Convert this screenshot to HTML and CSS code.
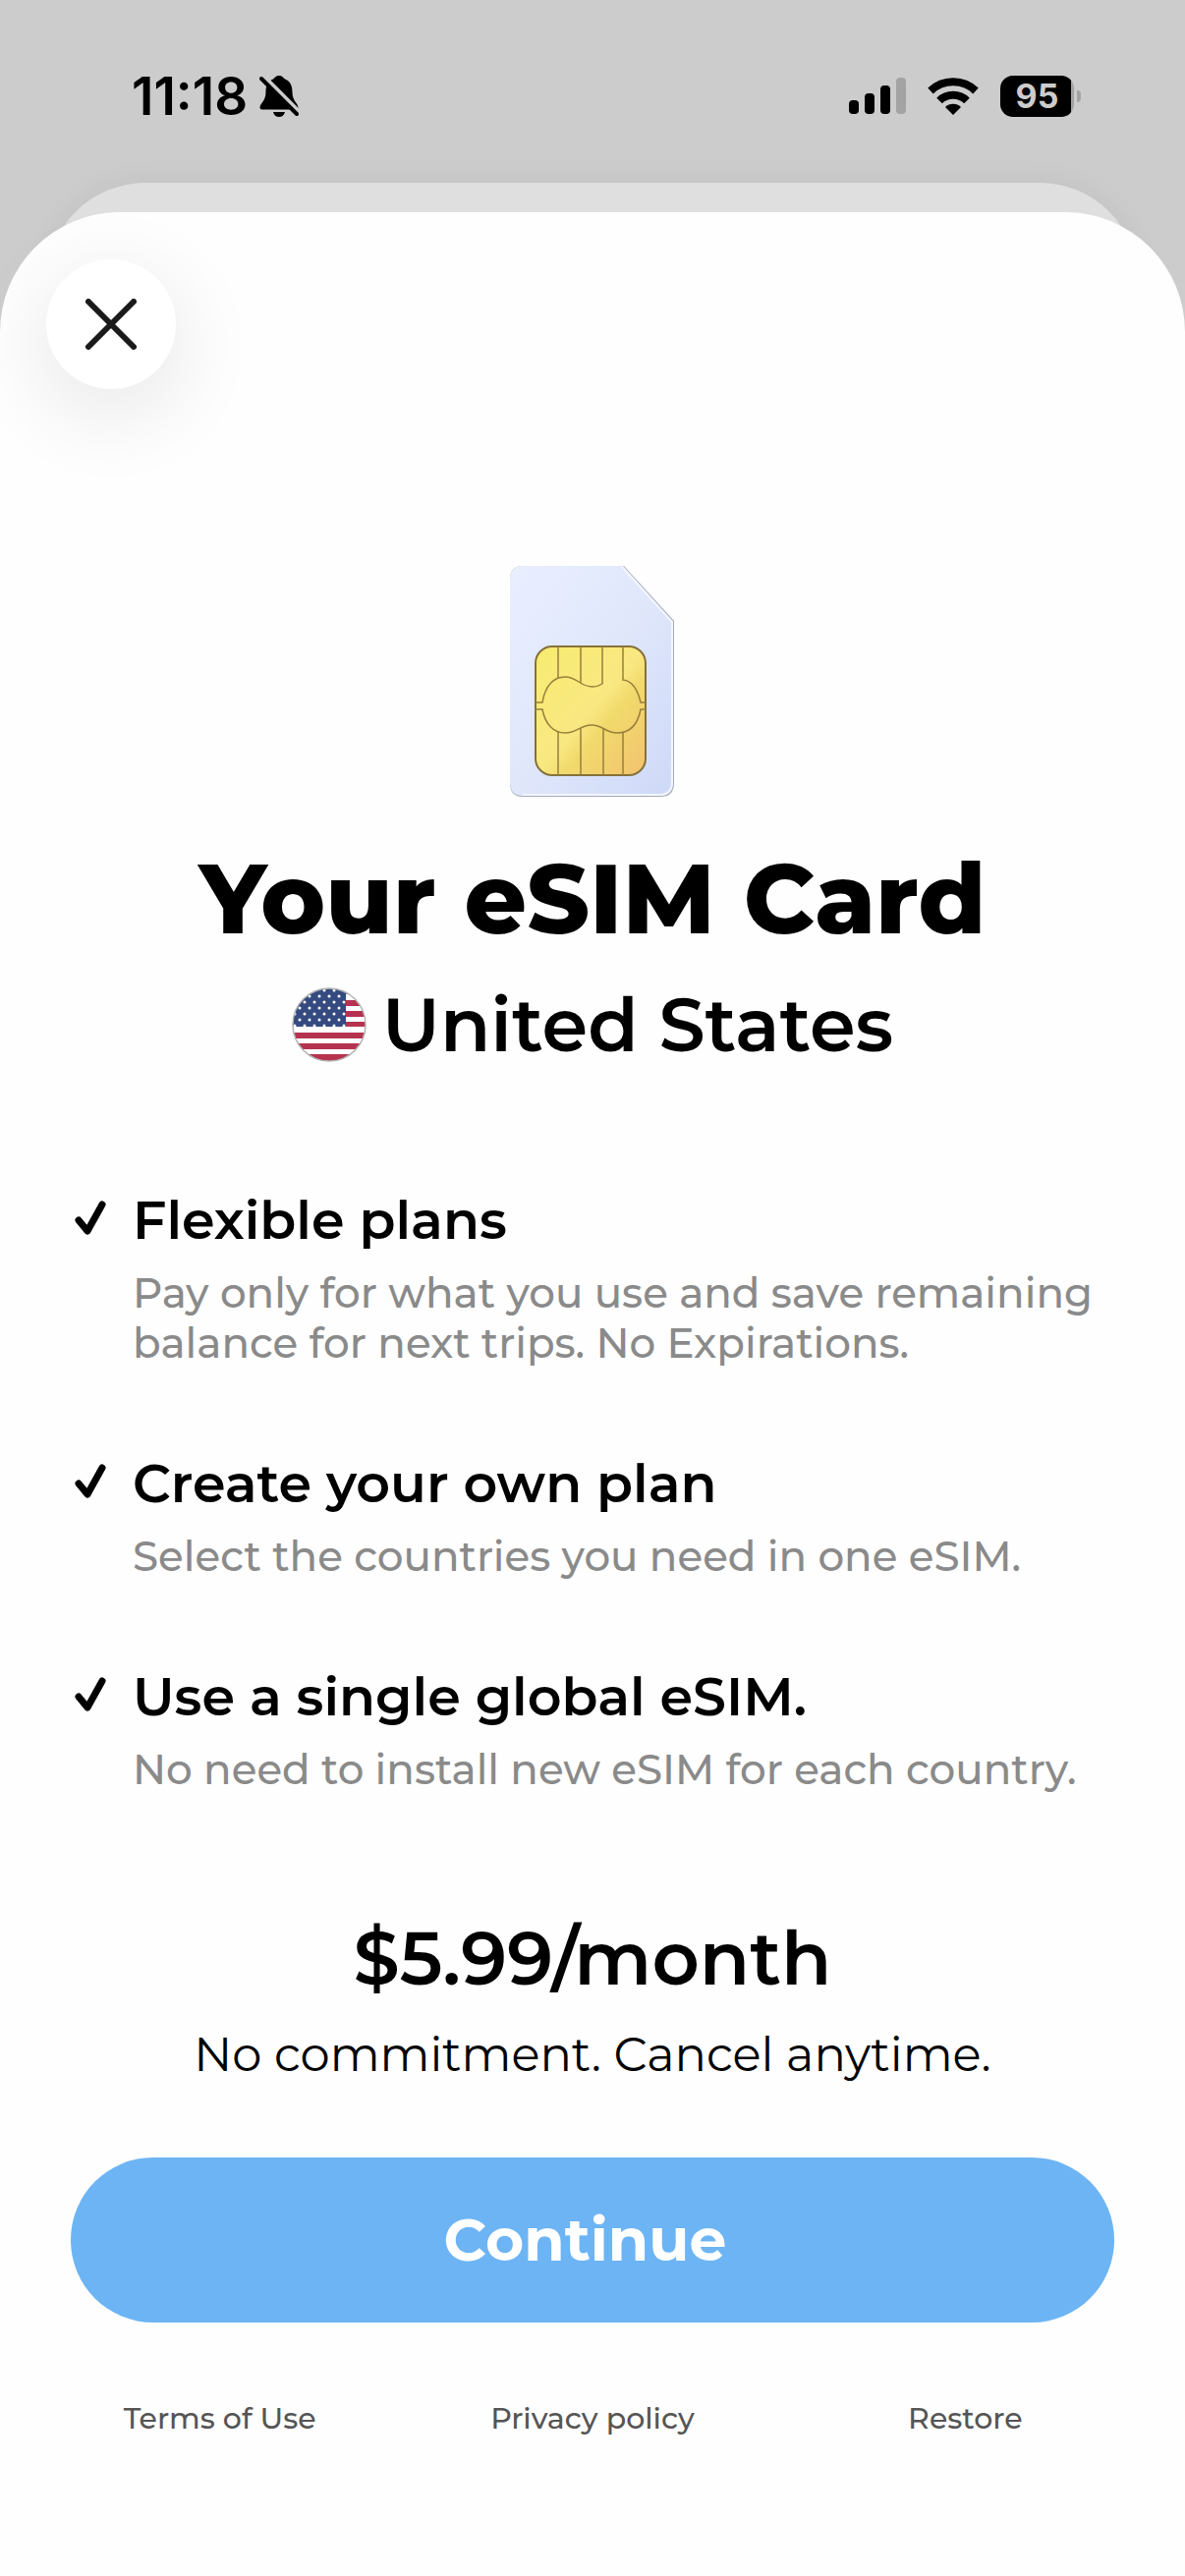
FILE: index.html
```html
<!DOCTYPE html>
<html lang="en">
    <head>
        <meta charset="UTF-8">
        <meta name="viewport" content="width=device-width, initial-scale=1">
        <title>Your eSIM Card</title>
        <link rel="stylesheet" href="styles.css">
    </head>
    <body>

        <header class="status-bar">
            <div class="status-left">
                <span class="time">11:18</span>
                <svg class="bell" viewBox="0 0 40 44" width="40" height="44" aria-hidden="true">
                    <path d="M20 1c-3.500 0-4.500 2.500-6 3.500C8 7 6.500 12 6.500 18c0 9-6 11-6 15.500 0 1.200 1 2 2.200 2h34.600c1.200 0 2.200-.8 2.200-2 0-4.500-6-6.500-6-15.500 0-6-1.500-11-7.500-13.500C24.500 3.500 23.500 1 20 1z"/>
                    <path d="M14 38h12c-.6 3-3 5-6 5s-5.400-2-6-5z"/>
                    <path class="bell-gap" d="M3 0l37 37"/>
                    <path class="bell-slash" d="M2 4l36 36"/>
                </svg>
            </div>
            <div class="status-right">
                <svg viewBox="0 0 58 38" width="58" height="38" aria-hidden="true">
                    <rect x="0" y="23" width="10" height="14" rx="4"/>
                    <rect x="16" y="16" width="10" height="21" rx="4"/>
                    <rect x="32" y="8" width="10" height="29" rx="4"/>
                    <rect x="48" y="0" width="10" height="37" rx="4" fill="#a3a3a3"/>
                </svg>
                <svg class="wifi" viewBox="0 0 52 38" width="52" height="38" aria-hidden="true">
                    <path d="M3 13.500a33.500 33.500 0 0 1 46 0" stroke-width="8"/>
                    <path d="M12 23.500a20 20 0 0 1 28 0" stroke-width="8"/>
                    <path class="wifi-dot" d="M26 38l-8-8a11.500 11.500 0 0 1 16 0z"/>
                </svg>
                <div class="battery"><span class="battery-level">95</span></div>
            </div>
        </header>

        <div class="back-card"></div>

        <main class="sheet">
            <button class="close" type="button" aria-label="Close">
                <svg viewBox="0 0 52 52" width="52" height="52" aria-hidden="true">
                    <path d="M3 3l46 46M49 3L3 49"/>
                </svg>
            </button>

            <svg class="sim" viewBox="0 0 170 237" width="170" height="237" aria-hidden="true">
                <defs>
                    <linearGradient id="card" x1="0" y1="0" x2="1" y2="1">
                        <stop offset="0" stop-color="#e9efff"/>
                        <stop offset="0.5" stop-color="#e0e7fb"/>
                        <stop offset="1" stop-color="#ced9f8"/>
                    </linearGradient>
                    <linearGradient id="chip" x1="0" y1="0" x2="1" y2="1">
                        <stop offset="0" stop-color="#f8ec70"/>
                        <stop offset="0.5" stop-color="#f9e882"/>
                        <stop offset="0.62" stop-color="#f1da6c"/>
                        <stop offset="1" stop-color="#f2c270"/>
                    </linearGradient>
                </defs>
                <path d="M14 0H117L168 56V221Q168 235 154 235H14Q1 235 1 221V14Q1 0 14 0z" fill="#a7abbd"/>
                <path d="M14 0H116L167 57V220Q167 234 153 234H14Q1 234 1 220V14Q1 0 14 0z" fill="url(#card)"/>
                <path d="M115 1L166 57V220Q166 233 153 233H14" fill="none" stroke="#f3f6ff" stroke-width="2"/>
                <rect x="27" y="82" width="112" height="131" rx="17" fill="url(#chip)" stroke="#85713a" stroke-width="2"/>
                <g fill="none" stroke="#98803c" stroke-width="1.500">
                    <path d="M27 139h7C37 121 46 113 57 113c13 0 15 10 28 10 4 0 7-1 10-3V82M116 82v34c10 1 15 10 18 23h5"/>
                    <path d="M27 146h7c3 16 12 24 23 24 13 0 15-8 27-8s14 8 26 8c13 0 21-8 24-24h5"/>
                    <path d="M50 82v32M73 82v37M50 169v44M73 165v48M96 165v48M116 170v43"/>
                </g>
            </svg>

            <h1>Your eSIM Card</h1>

            <div class="country">
                <svg viewBox="0 0 76 76" width="76" height="76" aria-hidden="true">
                    <defs>
                        <clipPath id="round"><circle cx="38" cy="38" r="37"/></clipPath>
                        <pattern id="stars" width="10" height="12" patternUnits="userSpaceOnUse">
                            <circle cx="3" cy="3" r="1.500" fill="#fff"/>
                            <circle cx="8" cy="9" r="1.500" fill="#fff"/>
                        </pattern>
                    </defs>
                    <g clip-path="url(#round)">
                        <path d="M0 0h76v76H0z" fill="#fff"/>
                        <path d="M0 2h76v5H0zM0 13h76v6H0zM0 24h76v6H0zM0 35h76v5H0zM0 46h76v6H0zM0 57h76v6H0zM0 68h76v8H0z" fill="#b5334f"/>
                        <path d="M0 0h55v40H0z" fill="#344a80"/>
                        <path d="M0 0h55v40H0z" fill="url(#stars)"/>
                    </g>
                    <circle cx="38" cy="38" r="37" fill="none" stroke="#b3b3b3" stroke-width="1.500"/>
                </svg>
                <h2>United States</h2>
            </div>

            <ul class="features">
                <li>
                    <svg class="check" viewBox="0 0 38 38" width="38" height="38" aria-hidden="true"><path d="M8 21l9 11L32 5"/></svg>
                    <div>
                        <h3>Flexible plans</h3>
                        <p>Pay only for what you use and save remaining balance for next trips. No Expirations.</p>
                    </div>
                </li>
                <li>
                    <svg class="check" viewBox="0 0 38 38" width="38" height="38" aria-hidden="true"><path d="M8 21l9 11L32 5"/></svg>
                    <div>
                        <h3>Create your own plan</h3>
                        <p>Select the countries you need in one eSIM.</p>
                    </div>
                </li>
                <li>
                    <svg class="check" viewBox="0 0 38 38" width="38" height="38" aria-hidden="true"><path d="M8 21l9 11L32 5"/></svg>
                    <div>
                        <h3>Use a single global eSIM.</h3>
                        <p>No need to install new eSIM for each country.</p>
                    </div>
                </li>
            </ul>

            <p class="price">$5.99/month</p>
            <p class="terms">No commitment. Cancel anytime.</p>

            <button class="continue" type="button">Continue</button>

            <nav class="links">
                <a href="#">Terms of Use</a>
                <a href="#">Privacy policy</a>
                <a href="#">Restore</a>
            </nav>
        </main>

    </body>
</html>
```
FILE: styles.css
```css
* {
    box-sizing: border-box;
}
body {
    display: flex;
    flex-direction: column;
    min-height: 100vh;
    margin: 0;
    background: #cccccc;
    color: #000;
    font-family: Montserrat, Inter, sans-serif;
}
h1, h2, h3, p, ul {
    margin: 0;
    padding: 0;
}
svg {
    flex: none;
}

/* status bar */
.status-bar {
    display: flex;
    justify-content: space-between;
    height: 186px;
    padding: 68px 106px 0 134px;
    font-family: Inter, sans-serif;
}
.status-left,
.status-right {
    display: flex;
    align-items: center;
    height: 60px;
}
.status-left {
    gap: 12px;
}
.status-right {
    gap: 22px;
}
.time {
    font-size: 53px;
    font-weight: 600;
}
.bell-gap,
.bell-slash {
    fill: none;
    stroke: #cccccc;
    stroke-width: 4;
}
.bell-slash {
    stroke: #000;
    stroke-linecap: round;
}
.wifi {
    fill: none;
    stroke: #000;
}
.wifi-dot {
    fill: #000;
    stroke: none;
}
.battery {
    display: flex;
    align-items: center;
    gap: 3px;
}
.battery::after {
    content: "";
    width: 4px;
    height: 12px;
    border-radius: 0 4px 4px 0;
    background: #a3a3a3;
}
.battery-level {
    width: 75px;
    height: 42px;
    border-radius: 13px;
    background: linear-gradient(to right, #000 96%, #a3a3a3 96%);
    color: #cccccc;
    font-size: 34px;
    font-weight: 700;
    line-height: 42px;
    text-align: center;
}

/* stacked sheets */
.back-card {
    height: 130px;
    margin: 0 48px;
    border-radius: 100px 100px 0 0;
    background: #dfdfdf;
    box-shadow: 0 0 30px rgba(0, 0, 0, 0.06);
}
.sheet {
    display: flex;
    flex: 1;
    flex-direction: column;
    align-items: center;
    margin-top: -100px;
    padding: 48px 72px;
    border-radius: 122px 122px 0 0;
    background: #fefefe;
    z-index: 1;
}
.close {
    display: flex;
    align-items: center;
    justify-content: center;
    align-self: flex-start;
    width: 132px;
    height: 132px;
    margin-left: -25px;
    border: none;
    border-radius: 50%;
    background: #fff;
    box-shadow: 0 22px 80px 10px rgba(0, 0, 0, 0.08);
}
.close path {
    fill: none;
    stroke: #1a1a1a;
    stroke-width: 6;
    stroke-linecap: round;
}
.sim {
    margin-top: 180px;
}
h1 {
    margin-top: 42px;
    font-size: 99px;
    font-weight: 800;
    line-height: 120px;
    text-align: center;
}
.country {
    display: flex;
    align-items: center;
    gap: 16px;
    margin-top: 22px;
}
h2 {
    font-size: 75px;
    font-weight: 600;
    line-height: 92px;
}

/* feature list */
.features {
    display: flex;
    flex-direction: column;
    gap: 84px;
    width: 100%;
    margin-top: 120px;
    list-style: none;
}
.features li {
    display: flex;
    gap: 25px;
}
.check {
    margin-top: 12px;
    fill: none;
    stroke: #000;
    stroke-width: 7;
    stroke-linecap: round;
    stroke-linejoin: round;
}
h3 {
    font-size: 54px;
    font-weight: 600;
    line-height: 66px;
}
.features p {
    margin-top: 16px;
    color: #8a8a8a;
    font-size: 42px;
    font-weight: 500;
    line-height: 51px;
}

/* price and actions */
.price {
    margin-top: 120px;
    font-size: 75px;
    font-weight: 600;
    line-height: 92px;
}
.terms {
    margin-top: 22px;
    font-size: 48px;
    line-height: 60px;
}
.continue {
    width: 100%;
    height: 168px;
    margin-top: 75px;
    padding: 0 15px 2px 0;
    border: none;
    border-radius: 84px;
    background: #6cb4f4;
    color: #fff;
    font-family: inherit;
    font-size: 60px;
    font-weight: 700;
}
.links {
    display: grid;
    grid-template-columns: repeat(3, 1fr);
    align-self: stretch;
    margin: 80px -38px 0;
    text-align: center;
}
.links a {
    color: #555;
    font-size: 30px;
    font-weight: 500;
    line-height: 36px;
    text-decoration: none;
}
```
